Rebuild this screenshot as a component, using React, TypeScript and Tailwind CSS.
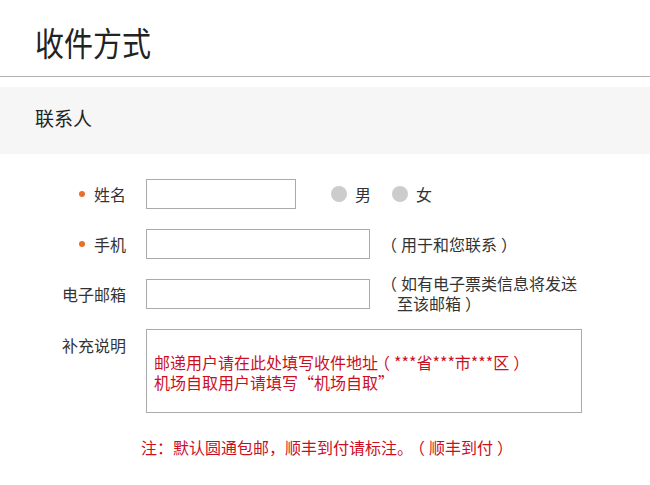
const FONT = "font-['Noto_Sans_CJK_SC','Noto_Sans',sans-serif] [text-spacing-trim:space-all]"

// fullwidth brackets: half-width glyph padded back out to one em, ink centred
function L() {
  return <span className="inline-block px-[4px] [font-feature-settings:'halt']">（</span>
}
function R() {
  return <span className="inline-block px-[4px] [font-feature-settings:'halt']">）</span>
}

function Dot() {
  return <span className="inline-block w-[6px] h-[6px] rounded-full bg-[#e8702a] mr-[9px]" />
}

function Radio({ label }: { label: string }) {
  return (
    <label className="flex items-center">
      <span className="inline-block w-[16px] h-[16px] rounded-full bg-[#cccccc]" />
      <span className="ml-[8px]">{label}</span>
    </label>
  )
}

export default function App() {
  return (
    <div className={`${FONT} w-[650px] h-[485px] bg-white text-[#333] text-[16px] leading-[20px] overflow-hidden`}>
      <div className="h-[76px] flex items-center px-[35px] border-b border-[#b0b0b0] box-content">
        <h1 className="text-[29px] leading-none font-normal text-[#222] scale-y-[1.12] origin-left pt-[6px]">收件方式</h1>
      </div>
      <div className="mt-[10px] h-[67px] bg-[#f6f6f6] flex items-center px-[35px] pb-[6px]">
        <h2 className="text-[19px] font-normal text-[#222]">联系人</h2>
      </div>

      <div className="pt-[25px]">
        <div className="flex items-center h-[30px]">
          <div className="w-[126px] flex items-center justify-end"><Dot />姓名</div>
          <input className="ml-[20px] w-[150px] h-[30px] border border-[#aaaaaa] outline-none" />
          <div className="ml-[35px] flex items-center gap-[21px]">
            <Radio label="男" />
            <Radio label="女" />
          </div>
        </div>

        <div className="flex items-center h-[30px] mt-[20px]">
          <div className="w-[126px] flex items-center justify-end"><Dot />手机</div>
          <input className="ml-[20px] w-[224px] h-[30px] border border-[#aaaaaa] outline-none" />
          <span className="ml-[15px]"><L />用于和您联系<R /></span>
        </div>

        <div className="flex items-start h-[30px] mt-[20px]">
          <div className="w-[126px] text-right leading-[30px]">电子邮箱</div>
          <input className="ml-[20px] w-[224px] h-[30px] border border-[#aaaaaa] outline-none" />
          <div className="ml-[15px] -mt-[6px]">
            <div><L />如有电子票类信息将发送</div>
            <div className="pl-[12px]">至该邮箱<R /></div>
          </div>
        </div>

        <div className="flex items-start mt-[20px]">
          <div className="w-[126px] text-right pt-[6px]">补充说明</div>
          <div className="ml-[20px] w-[436px] h-[84px] border border-[#aaaaaa] pl-[7px] pt-[22px] text-[#cc0f1f]">
            <div>邮递用户请在此处填写收件地址<L />***省***市***区<R /></div>
            <div>机场自取用户请填写“机场自取”</div>
          </div>
        </div>

        <p className="mt-[24px] text-center text-[#cc0f1f]">注：默认圆通包邮，顺丰到付请标注。<L />顺丰到付<R /></p>
      </div>
    </div>
  )
}
